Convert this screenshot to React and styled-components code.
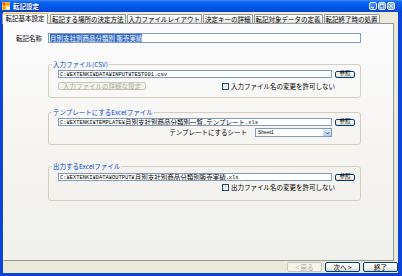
import React from 'react';
import styled, { createGlobalStyle } from 'styled-components';

const Global = createGlobalStyle`
  html, body { margin: 0; padding: 0; background: #fff; }
  body {
    font-family: "Noto Sans CJK JP", "Noto Sans", sans-serif;
    font-size: 6.5px;
    -webkit-font-smoothing: antialiased;
  }
`;

const Window = styled.div`
  width: 402px;
  height: 276px;
  display: flex;
  flex-direction: column;
  background: #0a44d8;
  overflow: hidden;
`;

const TitleBar = styled.div`
  flex: none;
  height: 12px;
  display: flex;
  align-items: center;
  gap: 3px;
  padding: 0 7px 0 2px;
  background: linear-gradient(#3a8ef8 0%, #0c62f0 18%, #0056e6 55%, #0050de 85%, #0343c6 100%);
`;

const Title = styled.span`
  flex: 1;
  color: #fff;
  font-weight: bold;
  font-size: 6.5px;
  line-height: 7px;
  text-shadow: 1px 1px 0 #0a2a8a;
`;

const Controls = styled.div`
  display: flex;
  gap: 1px;
`;

const CtrlButton = styled.div`
  width: 8px;
  height: 8px;
  box-sizing: border-box;
  border: 1px solid #e8eefc;
  border-radius: 2px;
  background: ${p => (p.$disabled ? '#8fa8e6' : 'linear-gradient(135deg, #5a9cff, #2361ea)')};
  display: flex;
  align-items: center;
  justify-content: center;
`;

const Client = styled.div`
  flex: 1;
  margin: 0 4px 3px 3px;
  background: #ece9d8;
  display: flex;
  flex-direction: column;
  min-height: 0;
`;

const TabStrip = styled.div`
  flex: none;
  height: 11px;
  display: flex;
  align-items: flex-end;
  gap: 1px;
`;

const Tab = styled.div`
  position: relative;
  z-index: ${p => (p.$active ? 2 : 1)};
  flex: none;
  height: ${p => (p.$active ? '11px' : '9px')};
  margin: 0 ${p => (p.$active ? '1px -1px -1px' : '0 0')};
  margin-left: ${p => (p.$active ? '-1px' : '0')};
  padding: 0 ${p => (p.$active ? '2.5px' : '1px')};
  box-sizing: border-box;
  border: 1px solid #919b9c;
  border-bottom: none;
  border-top-color: ${p => (p.$active ? '#f0b65a' : '#919b9c')};
  border-radius: 2px 2px 0 0;
  background: ${p => (p.$active ? '#fcfcfe' : 'linear-gradient(#ffffff, #ecebe6 80%, #dedcd3)')};
  color: #000;
  font-size: 6.5px;
  line-height: 8px;
  white-space: nowrap;
`;

const Panel = styled.div`
  flex: 1;
  margin-right: 4px;
  border: 1px solid #919b9c;
  border-left-color: #fcfcfe;
  background: linear-gradient(#fcfcfe, #f4f3ef 60%, #f0f0ec);
  padding-top: 9px;
  min-height: 0;
`;

const NameRow = styled.div`
  display: flex;
  align-items: center;
  padding-left: 12px;
`;

const Label = styled.span`
  width: 32px;
  color: #000;
  font-size: 6.5px;
  line-height: 7px;
  white-space: nowrap;
`;

const TextBox = styled.div`
  width: ${p => p.$width}px;
  height: ${p => p.$height || 8}px;
  box-sizing: border-box;
  border: 1px solid #7f9db9;
  background: #fff;
  display: flex;
  align-items: center;
  padding-left: 1px;
  overflow: hidden;
  white-space: nowrap;
  color: #000;
`;

const Selected = styled.span`
  background: #316ac5;
  color: #fff;
  font-size: 6.5px;
  line-height: 8px;
`;

const Group = styled.fieldset`
  margin: ${p => p.$top}px 0 0 44px;
  width: 313px;
  box-sizing: border-box;
  padding: ${p => p.$pt || 2}px 5px ${p => p.$pb || 7}px 9px;
  border: 1px solid #d0d0bf;
  border-radius: 3px;
  min-width: 0;
`;

const Legend = styled.legend`
  margin-left: -6px;
  padding: 0 1px;
  color: #0046d5;
  font-size: 6.5px;
  line-height: 7px;
  white-space: nowrap;
`;

const FieldRow = styled.div`
  display: flex;
  align-items: center;
  gap: 3px;
`;

const OptionRow = styled.div`
  display: flex;
  align-items: center;
  justify-content: ${p => p.$align || 'space-between'};
  gap: 8px;
  margin-top: ${p => p.$mt || 4}px;
  padding-right: ${p => p.$pr || 20}px;
`;

const XPButton = styled.div`
  width: ${p => p.$width}px;
  height: ${p => p.$height || 8}px;
  box-sizing: border-box;
  display: flex;
  align-items: center;
  justify-content: center;
  border: 1px solid ${p => (p.$disabled ? '#c9c7ba' : '#003c74')};
  border-radius: 2px;
  background: ${p => (p.$disabled ? '#f5f4ea' : 'linear-gradient(#ffffff, #f3f2ec 60%, #d8d4c8)')};
  color: ${p => (p.$disabled ? '#aca899' : '#000')};
  font-size: ${p => p.$size || 6.5}px;
  line-height: 1;
  white-space: nowrap;
`;

const CheckLabel = styled.div`
  display: flex;
  align-items: center;
  gap: 2px;
  font-size: 6.5px;
  line-height: 7px;
  color: #000;
  white-space: nowrap;
`;

const Box = styled.span`
  width: 7px;
  height: 7px;
  box-sizing: border-box;
  border: 1px solid #1c5180;
  background: linear-gradient(135deg, #dcdcd7, #fff);
`;

const Select = styled.div`
  width: 77px;
  height: 9px;
  box-sizing: border-box;
  border: 1px solid #7f9db9;
  background: #fff;
  display: flex;
  align-items: stretch;
`;

const SelectText = styled.span`
  flex: 1;
  padding-left: 2px;
  font-family: "Liberation Sans", sans-serif;
  font-size: 5px;
  line-height: 7px;
  color: #000;
`;

const DropArrow = styled.span`
  width: 8px;
  background: linear-gradient(#e2ebfe, #b7cbf7);
  border-left: 1px solid #fff;
  display: flex;
  align-items: center;
  justify-content: center;
`;

const Latin = styled.span`
  font-family: "Liberation Mono", monospace;
  font-size: 5.42px;
  line-height: 7px;
`;

const Wide = styled.span`
  font-size: 6.5px;
  line-height: 7px;
`;

const Footer = styled.div`
  flex: none;
  height: 12px;
  display: flex;
  align-items: center;
  justify-content: flex-end;
  gap: 3px;
`;

function PathText({ text }) {
  const parts = text.split(/([\x00-\xff]+)/).filter(Boolean);
  return parts.map((p, i) =>
    /^[\x00-\xff]+$/.test(p) ? <Latin key={i}>{p}</Latin> : <Wide key={i}>{p}</Wide>
  );
}

function Check({ children }) {
  return (
    <CheckLabel>
      <Box />
      {children}
    </CheckLabel>
  );
}

function AppIcon() {
  return (
    <svg width="8" height="8" viewBox="0 0 8 8">
      <rect x="0" y="0" width="8" height="8" fill="#f7d44a" />
      <rect x="0.5" y="0.5" width="3" height="3" fill="#e8541c" />
      <rect x="4.5" y="0.5" width="3" height="3" fill="#f29b1f" />
      <rect x="0.5" y="4.5" width="3" height="3" fill="#f29b1f" />
      <rect x="4.5" y="4.5" width="3" height="3" fill="#ffffff" />
    </svg>
  );
}

const tabs = [
  '転記基本設定',
  '転記する場所の決定方法',
  '入力ファイルレイアウト',
  '決定キーの詳細',
  '転記対象データの定義',
  '転記終了時の処置',
];

export default function App() {
  return (
    <>
      <Global />
      <Window>
        <TitleBar>
          <AppIcon />
          <Title>転記設定</Title>
          <Controls>
            <CtrlButton>
              <svg width="6" height="6" viewBox="0 0 6 6">
                <rect x="1" y="4" width="3" height="1.2" fill="#fff" />
              </svg>
            </CtrlButton>
            <CtrlButton>
              <svg width="6" height="6" viewBox="0 0 6 6">
                <rect x="1" y="1" width="4" height="4" fill="none" stroke="#fff" strokeWidth="0.8" />
                <rect x="1" y="1" width="4" height="1" fill="#fff" />
              </svg>
            </CtrlButton>
            <CtrlButton $disabled>
              <svg width="6" height="6" viewBox="0 0 6 6">
                <path d="M1 1 L5 5 M5 1 L1 5" stroke="#d8e2f8" strokeWidth="1" />
              </svg>
            </CtrlButton>
          </Controls>
        </TitleBar>
        <Client>
          <TabStrip>
            {tabs.map((t, i) => (
              <Tab key={t} $active={i === 0}>{t}</Tab>
            ))}
          </TabStrip>
          <Panel>
            <NameRow>
              <Label>転記名称</Label>
              <TextBox $width={313} $height={10}>
                <Selected>月別支社別商品分類別 販売実績</Selected>
              </TextBox>
            </NameRow>

            <Group $top={18}>
              <Legend>入力ファイル(CSV)</Legend>
              <FieldRow>
                <TextBox $width={275}>
                  <PathText text="C:¥EXTENKI¥DATA¥INPUT¥TEST001.csv" />
                </TextBox>
                <XPButton $width={20} $height={7} $size={5.5}>参照</XPButton>
              </FieldRow>
              <OptionRow>
                <XPButton $width={88} $disabled>入力ファイルの詳細な設定</XPButton>
                <Check>入力ファイル名の変更を許可しない</Check>
              </OptionRow>
            </Group>

            <Group $top={11}>
              <Legend>テンプレートにするExcelファイル</Legend>
              <FieldRow>
                <TextBox $width={275}>
                  <PathText text="C:¥EXTENKI¥TEMPLATE¥月別支社別商品分類別一覧_テンプレート.xls" />
                </TextBox>
                <XPButton $width={20} $height={7} $size={5.5}>参照</XPButton>
              </FieldRow>
              <OptionRow $align="flex-end" $mt={2} $pr={23}>
                <Label as="span" style={{ width: 'auto' }}>テンプレートにするシート</Label>
                <Select>
                  <SelectText>Sheet1</SelectText>
                  <DropArrow>
                    <svg width="5" height="4" viewBox="0 0 5 4">
                      <path d="M0.5 1 L2.5 3 L4.5 1" fill="none" stroke="#4d6185" strokeWidth="1" />
                    </svg>
                  </DropArrow>
                </Select>
              </OptionRow>
            </Group>

            <Group $top={18} $pt={3} $pb={9}>
              <Legend>出力するExcelファイル</Legend>
              <FieldRow>
                <TextBox $width={275}>
                  <PathText text="C:¥EXTENKI¥DATA¥OUTPUT¥月別支社別商品分類別 販売実績.xls" />
                </TextBox>
                <XPButton $width={20} $height={7} $size={5.5}>参照</XPButton>
              </FieldRow>
              <OptionRow $align="flex-end" $mt={3}>
                <Check>出力ファイル名の変更を許可しない</Check>
              </OptionRow>
            </Group>
          </Panel>
          <Footer>
            <XPButton $width={35} $height={10} $disabled>&lt; 戻る</XPButton>
            <XPButton $width={35} $height={10}>次へ &gt;</XPButton>
            <XPButton $width={35} $height={10}>終了</XPButton>
          </Footer>
        </Client>
      </Window>
    </>
  );
}
